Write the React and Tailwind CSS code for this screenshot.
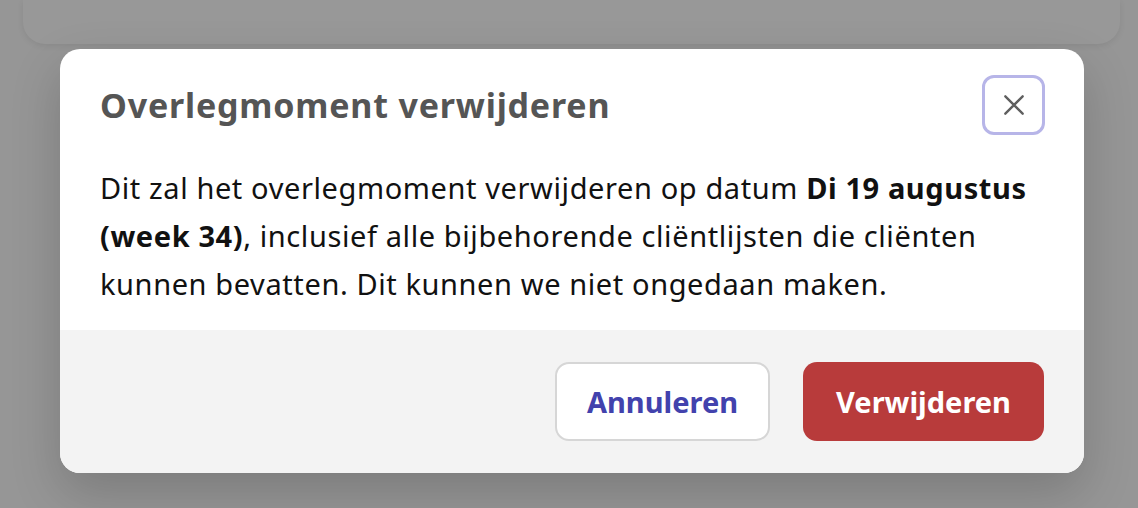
import React from "react";

export default function App() {
  return (
    <div
      className="w-[1138px] h-[508px] overflow-hidden bg-[#969696]"
      style={{ fontFamily: '"Noto Sans", "Open Sans", sans-serif' }}
    >
      {/* page card behind the overlay */}
      <div className="ml-[23px] mr-[18px] h-[44px] rounded-b-[22px] bg-[#989898] shadow-[0_2px_6px_rgba(0,0,0,0.08)]" />

      {/* dialog */}
      <div className="mt-[5px] mx-[60px] w-[1024px] rounded-[20px] bg-white overflow-hidden shadow-[0_20px_50px_rgba(0,0,0,0.18)]">
        <div className="px-[40px] pt-[26px] pb-[22px]">
          <div className="flex items-center justify-between">
            <h2 className="text-[34px] leading-[40px] font-bold text-[#555555] tracking-[0.8px]">
              Overlegmoment verwijderen
            </h2>
            <button className="w-[63px] h-[60px] -mr-[1px] rounded-[12px] border-[3px] border-[#b7b5e8] flex items-center justify-center text-[#606060]">
              <svg width="26" height="26" viewBox="0 0 24 24" fill="none" stroke="currentColor" strokeWidth="2.2" strokeLinecap="round">
                <path d="M4 4l16 16M20 4L4 20" />
              </svg>
            </button>
          </div>
          <p className="mt-[29px] text-[29px] leading-[48px] text-[#111111] tracking-[0.6px]">
            Dit zal het overlegmoment verwijderen op datum <b className="font-bold">Di 19 augustus (week 34)</b>, inclusief alle bijbehorende cliëntlijsten die cliënten kunnen bevatten. Dit kunnen we niet ongedaan maken.
          </p>
        </div>
        <div className="bg-[#f3f3f3] px-[40px] pt-[32px] pb-[32px] flex justify-end gap-[33px]">
          <button className="w-[215px] h-[79px] rounded-[14px] bg-white border-2 border-[#d6d6d6] text-[29px] font-bold text-[#4242ad]">
            Annuleren
          </button>
          <button className="w-[241px] h-[79px] rounded-[14px] bg-[#b83b3b] text-[29px] font-bold text-white">
            Verwijderen
          </button>
        </div>
      </div>
    </div>
  );
}
